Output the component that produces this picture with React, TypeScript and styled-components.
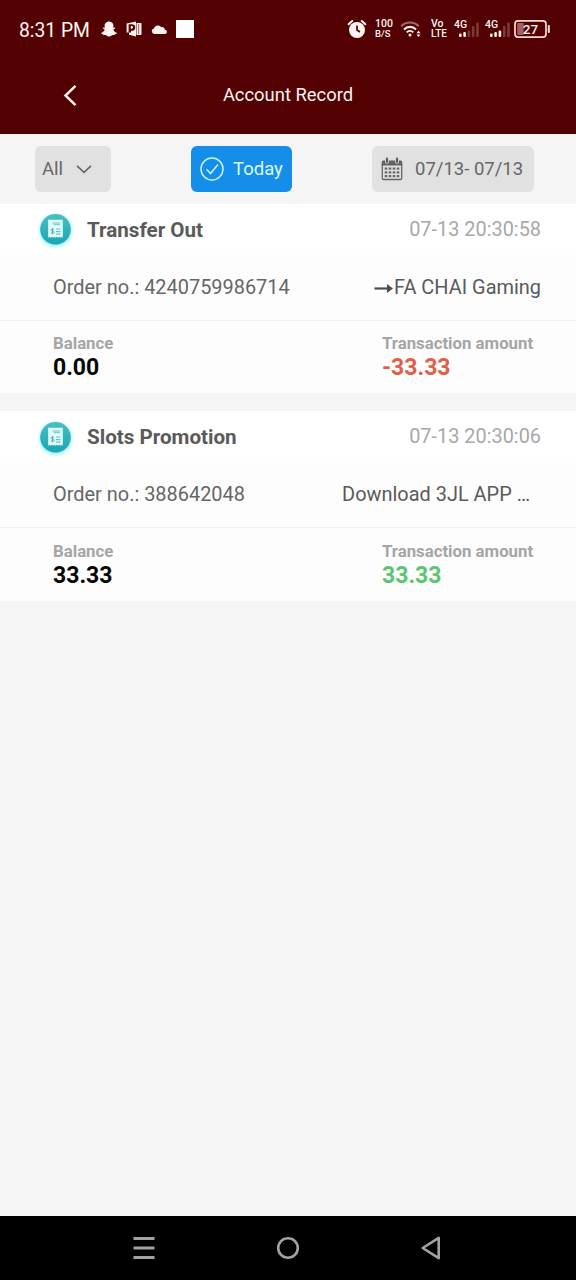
import React from "react";
import styled, { createGlobalStyle } from "styled-components";
import { FaSnapchatGhost } from "react-icons/fa";

const GlobalStyle = createGlobalStyle`
  * { box-sizing: border-box; }
  body {
    margin: 0;
    background: #f5f5f5;
    font-family: Roboto, "Liberation Sans", sans-serif;
  }
`;

const Screen = styled.div`
  display: flex;
  flex-direction: column;
  width: 576px;
  height: 1280px;
  overflow: hidden;
  background: #f5f5f5;
`;

const StatusBar = styled.div`
  display: flex;
  align-items: center;
  justify-content: space-between;
  height: 58px;
  flex: none;
  padding: 0 25px 0 19px;
  background: #520001;
  color: #fff3f0;
`;

const StatusGroup = styled.div`
  display: flex;
  align-items: center;
  height: 24px;
  svg { display: block; flex: none; }
`;

const Clock = styled.span`
  width: 82px;
  font-size: 19.3px;
  line-height: 24px;
  padding-top: 3px;
  white-space: nowrap;
`;

const StatusItem = styled.div<{ $gap?: number }>`
  margin-left: ${(p) => p.$gap ?? 0}px;
  flex: none;
`;

const Stacked = styled.div<{ $gap: number; $width: number }>`
  display: flex;
  flex-direction: column;
  margin-left: ${(p) => p.$gap}px;
  width: ${(p) => p.$width}px;
  font-weight: 500;
  font-size: 10.5px;
  line-height: 10px;
  white-space: nowrap;
`;

const Small = styled.span<{ $size: number }>`
  font-size: ${(p) => p.$size}px;
`;

const Header = styled.header`
  display: grid;
  grid-template-columns: 1fr auto 1fr;
  align-items: center;
  height: 76px;
  flex: none;
  padding: 0 61px 2px;
  background: #520001;
  color: #fff3f0;
  svg { display: block; }
`;

const Title = styled.h1`
  margin: 0;
  font-size: 18.4px;
  font-weight: 400;
  line-height: 24px;
`;

const Filters = styled.div`
  display: flex;
  justify-content: space-between;
  flex: none;
  height: 69.7px;
  padding: 12px 42px 0 35px;
`;

const Chip = styled.button<{ $active?: boolean; $width: number; $pad: number; $gap: number }>`
  display: flex;
  align-items: center;
  gap: ${(p) => p.$gap}px;
  width: ${(p) => p.$width}px;
  height: 46px;
  padding: 0 0 0 ${(p) => p.$pad}px;
  border: 0;
  border-radius: 6px;
  background: ${(p) => (p.$active ? "#158ee9" : "#e1e1e1")};
  color: ${(p) => (p.$active ? "#dcfaff" : "#666")};
  font: 400 18.5px/24px Roboto, "Liberation Sans", sans-serif;
  white-space: nowrap;
  svg { display: block; flex: none; }
`;

const Card = styled.section`
  flex: none;
  height: 189.3px;
  margin-bottom: 18.4px;
  background: #fdfdfd;
`;

const CardHead = styled.div`
  display: flex;
  align-items: center;
  height: 51.5px;
  padding: 0 35px 0 35px;
  background: #fff;
  svg { display: block; flex: none; }
`;

const CardTitle = styled.h2`
  flex: 1;
  margin: 0 0 0 11px;
  color: #5a5a5a;
  font-size: 20.6px;
  font-weight: 700;
  line-height: 24px;
  padding-top: 0.5px;
`;

const Time = styled.time`
  color: #a8a8a8;
  font-size: 19.9px;
  line-height: 24px;
  padding-top: 0.3px;
`;

const OrderRow = styled.div<{ $inset?: boolean }>`
  display: flex;
  align-items: center;
  justify-content: space-between;
  height: 65.5px;
  padding: 0.4px ${(p) => (p.$inset ? 46 : 35)}px 0 53px;
  border-bottom: 1px solid #f1f1f1;
  color: #666;
  font-size: 19.93px;
  line-height: 24px;
`;

const Detail = styled.span`
  display: flex;
  align-items: center;
  color: #5a5a5a;
`;

const Amounts = styled.div`
  display: grid;
  grid-template-columns: 329px 1fr;
  padding: 11.6px 0 0 53px;
`;

const Label = styled.div`
  color: #a5a5a5;
  font-size: 16.8px;
  font-weight: 700;
  line-height: 22px;
`;

const Value = styled.div<{ $color: string }>`
  padding-top: 0.6px;
  color: ${(p) => p.$color};
  font-size: 23px;
  font-weight: 700;
  line-height: 25px;
`;

const NavBar = styled.nav`
  display: grid;
  grid-template-columns: repeat(3, 144px);
  justify-content: center;
  align-items: center;
  justify-items: center;
  flex: none;
  height: 64px;
  margin-top: auto;
  background: #000;
  svg { display: block; }
`;

const OfficeIcon = () => (
  <svg width="16" height="18" viewBox="0 0 16 18">
    <path d="M.6 3.600 10 1.500v15L3 14.800v-2.300h2V10.800c3 .2 4.300-1.300 4.300-3.400 0-2.200-1.400-3.200-3.700-3.200H2.600v8.300H.6z" fill="#fff3f0" />
    <path d="M4.800 6.100h.9c1.700 0 1.700 2.700 0 2.700h-.9z" fill="#fff3f0" />
    <path d="M10.500 3h4.200q.8 0 .8.800v10.400q0 .8-.8.800h-4.200z" fill="#fff3f0" />
    <path d="M12.700 4v10" stroke="#8b4a49" strokeWidth=".9" />
  </svg>
);

const CloudIcon = () => (
  <svg width="17" height="11" viewBox="0 0 17 11">
    <path d="M3.200 10a2.800 2.800 0 0 1-.3-5.500C3.900 1.500 8 .3 10.200 3.200c2.100-.4 3.400.8 3.600 2.500 2.900.2 2.800 4.300 0 4.300z" fill="#fff3f0" />
  </svg>
);

const AlarmIcon = () => (
  <svg width="20" height="20" viewBox="0 0 20 20">
    <circle cx="10" cy="11" r="8" fill="#fff6f4" />
    <path d="M1.600 5.200 5.200 2M18.400 5.200 14.800 2" stroke="#fff6f4" strokeWidth="2" strokeLinecap="round" />
    <path d="M10 6.500V11l3 2" stroke="#520001" strokeWidth="1.700" fill="none" />
  </svg>
);

const WifiIcon = () => (
  <svg width="22" height="18" viewBox="0 0 22 18" fill="none">
    <path d="M1.200 6.200a12.300 12.300 0 0 1 17.600 0" stroke="#a46a68" strokeWidth="2" />
    <path d="M4 9.400a8.400 8.400 0 0 1 12 0" stroke="#fff3f0" strokeWidth="2.100" />
    <path d="M6.700 12.400a4.700 4.700 0 0 1 6.600 0" stroke="#fff3f0" strokeWidth="2" />
    <circle cx="10" cy="15" r="1.500" fill="#fff3f0" />
    <path d="m18.500 10.500 2 2.700h-4zM18.500 17l2-2.500h-4z" fill="#fff3f0" />
  </svg>
);

const SignalIcon = ({ level }: { level: number }) => (
  <svg width="27" height="20" viewBox="0 0 27 20">
    <text x="0" y="9" fontSize="10.500" fontWeight="500" fill="#fff3f0">4G</text>
    {[3.500, 5, 6.500, 11, 14.500].map((h, i) => (
      <rect key={i} x={5 + i * 4.300} y={18 - h} width="2.600" height={h} rx="1" fill={i < level ? "#fff3f0" : "#7e3a3a"} />
    ))}
  </svg>
);

const BatteryIcon = () => (
  <svg width="37" height="20" viewBox="0 0 37 20">
    <rect x="1" y="1.900" width="31" height="16.200" rx="3.200" fill="none" stroke="#ffd9d6" strokeWidth="1.700" />
    <rect x="3.200" y="4" width="6.500" height="12" rx="1" fill="#a06260" />
    <path d="M34.800 7v6" stroke="#ffe5e2" strokeWidth="2" strokeLinecap="round" />
    <text x="16.500" y="14.800" textAnchor="middle" fontSize="13.500" fontWeight="500" fill="#fff3f0">27</text>
  </svg>
);

const CalendarIcon = () => (
  <svg width="22" height="24" viewBox="0 0 22 24">
    <path d="M.8 8.500V5A1.500 1.500 0 0 1 2.300 3.500h17.400a1.500 1.500 0 0 1 1.500 1.500v3.500z" fill="#606060" />
    <rect x="1.300" y="6" width="19.400" height="16.500" rx="1" fill="none" stroke="#666" strokeWidth="1.300" />
    <path d="M6 2.500v2.200M16 2.500v2.200" stroke="#e1e1e1" strokeWidth="4" strokeLinecap="round" />
    <path d="M6 1.800v3M16 1.800v3" stroke="#606060" strokeWidth="2.400" strokeLinecap="round" />
    {[10.500, 14.300, 18].map((y) =>
      [3.700, 7.700, 11.700, 15.700].map((x) => <rect key={`${x}-${y}`} x={x} y={y} width="2.600" height="2.200" fill="#666" />)
    )}
  </svg>
);

const ReceiptIcon = () => (
  <svg width="41" height="42" viewBox="0 0 41 42">
    <defs>
      <linearGradient id="teal" x1="0" y1="0" x2="0" y2="1">
        <stop offset="0" stopColor="#4bc0be" />
        <stop offset="1" stopColor="#18a5b3" />
      </linearGradient>
      <radialGradient id="glow">
        <stop offset=".75" stopColor="#8beef8" stopOpacity=".9" />
        <stop offset="1" stopColor="#c9fbff" stopOpacity="0" />
      </radialGradient>
    </defs>
    <circle cx="20.500" cy="22.500" r="19" fill="url(#glow)" />
    <circle cx="20.500" cy="21.300" r="15.300" fill="url(#teal)" />
    <path d="M13.200 11.800h14.600v18l-1.200-1-1.200 1-1.200-1-1.200 1-1.300-1-1.200 1-1.200-1-1.200 1-1.200-1-1.300 1-1.200-1-1.200 1z" fill="#e2ffff" />
    <path d="M17.500 15h7.500M18.500 16.800h6.500M21 21h4.500M21 23.600h4.500M21 26.100h4.500" stroke="#65bfc5" strokeWidth="1.100" />
    <path d="M18.800 21.500c-.7-.7-2.700-.7-2.700.5 0 1.400 2.900.8 2.900 2.300 0 1.300-2.300 1.300-3.100.4M17.500 20v6.500" stroke="#53aeb5" strokeWidth="1" fill="none" />
  </svg>
);

type RecordProps = {
  title: string;
  time: string;
  order: string;
  detail: string;
  arrow?: boolean;
  balance: string;
  amount: string;
  color: string;
};

const RecordCard = ({ title, time, order, detail, arrow, balance, amount, color }: RecordProps) => (
  <Card>
    <CardHead>
      <ReceiptIcon />
      <CardTitle>{title}</CardTitle>
      <Time>{time}</Time>
    </CardHead>
    <OrderRow $inset={!arrow}>
      <span>Order no.: {order}</span>
      <Detail>
        {arrow && (
          <svg width="20" height="12" viewBox="0 0 20 12">
            <path d="M.5 6.500h14" stroke="#4c4c4c" strokeWidth="2.200" />
            <path d="M13 2.100 19 6.500 13 10.900z" fill="#4c4c4c" />
          </svg>
        )}
        {detail}
      </Detail>
    </OrderRow>
    <Amounts>
      <div>
        <Label>Balance</Label>
        <Value $color="#050505">{balance}</Value>
      </div>
      <div>
        <Label>Transaction amount</Label>
        <Value $color={color}>{amount}</Value>
      </div>
    </Amounts>
  </Card>
);

export default function App() {
  return (
    <>
      <GlobalStyle />
      <Screen>
        <StatusBar>
          <StatusGroup>
            <Clock>8:31 PM</Clock>
            <FaSnapchatGhost size={16} />
            <StatusItem $gap={9}><OfficeIcon /></StatusItem>
            <StatusItem $gap={9}><CloudIcon /></StatusItem>
            <StatusItem $gap={8}>
              <svg width="18" height="18" viewBox="0 0 18 18"><path d="M0 0h18v18H0z" fill="#fff" /></svg>
            </StatusItem>
          </StatusGroup>
          <StatusGroup>
            <AlarmIcon />
            <Stacked $gap={8} $width={18}>
              <span>100</span>
              <Small $size={9.5}>B/S</Small>
            </Stacked>
            <StatusItem $gap={7}><WifiIcon /></StatusItem>
            <Stacked $gap={9} $width={17}>
              <span>Vo</span>
              <Small $size={10}>LTE</Small>
            </Stacked>
            <StatusItem $gap={6}><SignalIcon level={2} /></StatusItem>
            <StatusItem $gap={4}><SignalIcon level={3} /></StatusItem>
            <StatusItem $gap={2}><BatteryIcon /></StatusItem>
          </StatusGroup>
        </StatusBar>
        <Header>
          <svg width="18" height="24" viewBox="0 0 18 24">
            <path d="M14.500 2.800 4.500 12.500l10 9.700" fill="none" stroke="#fff3f0" strokeWidth="2.500" />
          </svg>
          <Title>Account Record</Title>
        </Header>
        <Filters>
          <Chip $width={76} $pad={7} $gap={13}>
            All
            <svg width="16" height="10" viewBox="0 0 16 10">
              <path d="m1 1.800 7 6.500 7-6.500" fill="none" stroke="#666" strokeWidth="1.600" />
            </svg>
          </Chip>
          <Chip $active $width={101} $pad={9} $gap={9}>
            <svg width="24" height="24" viewBox="0 0 24 24" fill="none" stroke="#c8f3ff" strokeWidth="1.500">
              <circle cx="12" cy="12" r="11" />
              <path d="m6.500 12.300 4 4.200 7.500-9" />
            </svg>
            Today
          </Chip>
          <Chip $width={162} $pad={9} $gap={12}>
            <CalendarIcon />
            07/13- 07/13
          </Chip>
        </Filters>
        <RecordCard
          title="Transfer Out"
          time="07-13 20:30:58"
          order="4240759986714"
          detail="FA CHAI Gaming"
          arrow
          balance="0.00"
          amount="-33.33"
          color="#e15f49"
        />
        <RecordCard
          title="Slots Promotion"
          time="07-13 20:30:06"
          order="388642048"
          detail="Download 3JL APP …"
          balance="33.33"
          amount="33.33"
          color="#5bc570"
        />
        <NavBar>
          <svg width="24" height="24" viewBox="0 0 24 24">
            <path d="M1.500 2.500h21M1.500 12h21M1.500 21.500h21" stroke="#a3a3a3" strokeWidth="2.800" />
          </svg>
          <svg width="24" height="24" viewBox="0 0 24 24">
            <circle cx="12" cy="12" r="9.800" fill="none" stroke="#a3a3a3" strokeWidth="2.600" />
          </svg>
          <svg width="24" height="24" viewBox="0 0 24 24">
            <path d="M18.700 1.800v20.400L2.700 12z" fill="none" stroke="#a3a3a3" strokeWidth="2.600" strokeLinejoin="round" />
          </svg>
        </NavBar>
      </Screen>
    </>
  );
}
